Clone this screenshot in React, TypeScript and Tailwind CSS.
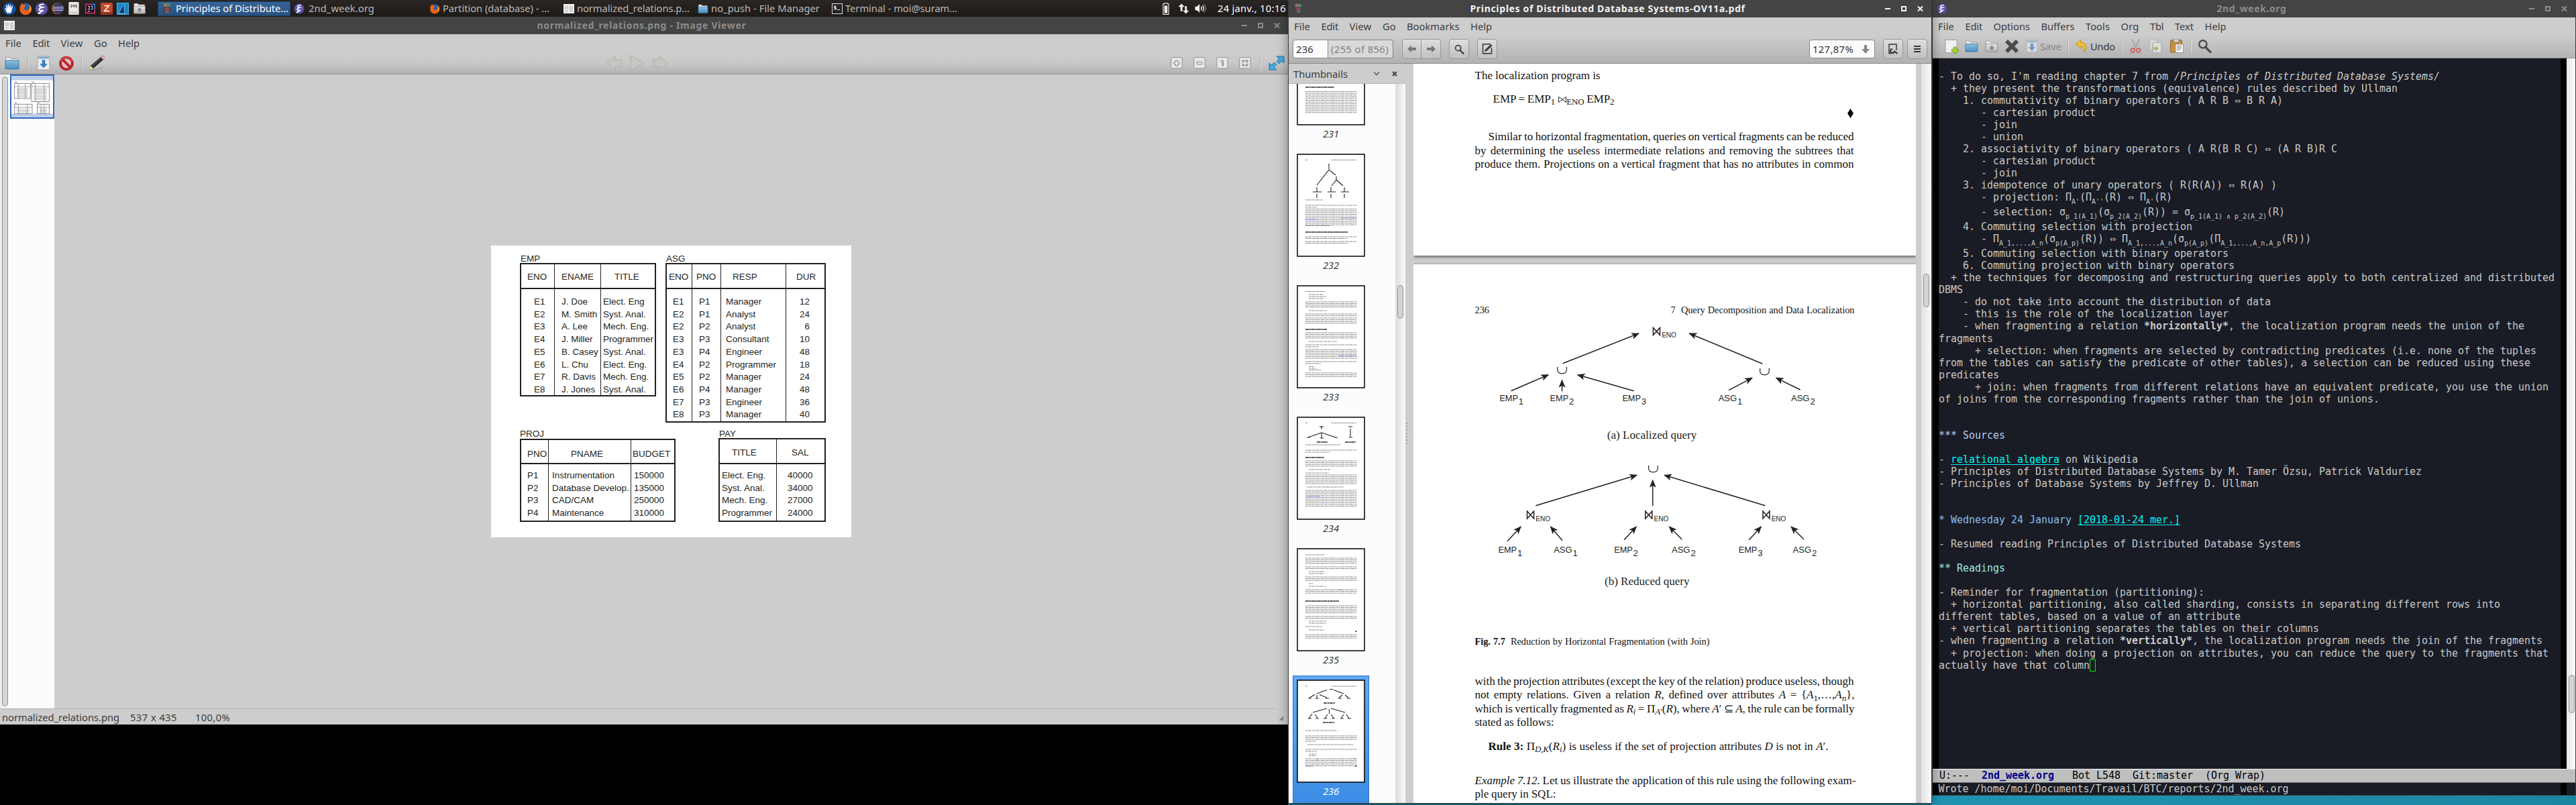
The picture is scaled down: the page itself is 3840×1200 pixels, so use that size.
import React, { useLayoutEffect, useRef, type ReactNode } from "react";

/** Inline text tuned to an exact width through letter or word spacing. */
function Fit({ w, words = false, className = "", children }: { w: number; words?: boolean; className?: string; children: ReactNode }) {
  const ref = useRef<HTMLSpanElement>(null);
  useLayoutEffect(() => {
    const el = ref.current;
    if (!el) return;
    el.style.letterSpacing = "";
    el.style.wordSpacing = "";
    const text = el.textContent ?? "";
    const delta = w - el.getBoundingClientRect().width;
    if (words) {
      el.style.wordSpacing = `${delta / Math.max(1, text.split(" ").length - 1)}px`;
    } else {
      el.style.letterSpacing = `${delta / Math.max(1, text.length)}px`;
    }
  }, [w, words, children]);
  return (
    <span className="block shrink-0 whitespace-nowrap" style={{ width: w }}>
      <span ref={ref} className={`inline-block whitespace-pre ${className}`}>{children}</span>
    </span>
  );
}

/* ---------- icons ---------- */

function EmacsIcon({ className }: { className: string }) {
  return (
    <svg viewBox="0 0 20 20" className={className}>
      <circle cx="10" cy="10" r="9.3" fill="#5b53a3" stroke="#3b357c" />
      <path d="M13.500 3.500c-5-.5-7.500 1.500-6 3.300 1 1.200 3.500.7 4.500 1-4 .9-6.500 2-5.700 3.700.8 1.600 3.500 1.600 6.500 1-3 1-5 2.500-8 5" fill="none" stroke="#fff" strokeWidth="1.900" />
      <path d="M12 13l-5 4.500" stroke="#d8d4ff" strokeWidth="1" />
    </svg>
  );
}

function FirefoxIcon({ className }: { className: string }) {
  return (
    <svg viewBox="0 0 20 20" className={className}>
      <circle cx="10" cy="9.500" r="8" fill="#2a5fa8" />
      <path d="M2 6c1-3 3-4 3.500-4.500 0 1.500 1 2.500 2.500 3 2 .3 3 1.500 2 2.500-1.800.6-2.500 1.800-1.800 3.500 1.500 2.500 6 2 7.300-1 .8-2.500-.5-5-2-6.500 4 1.200 6 5 5.500 9-1 5-5.500 8-10.500 7.200C3 18.300.5 13 2 6z" fill="#e8621b" />
      <path d="M17 5c2 3 1.500 8-2 10.500 1.500-3.500 2.500-6.500 2-10.500z" fill="#f9c32b" />
    </svg>
  );
}

function FolderIcon({ className, home = false }: { className: string; home?: boolean }) {
  const top = home ? "#e4e4e4" : "#8fc0e0";
  const low = home ? "#b5b5b5" : "#4e8fbf";
  const id = home ? "homeFolder" : "blueFolder";
  return (
    <svg viewBox="0 0 22 20" className={className}>
      <defs>
        <linearGradient id={id} x1="0" y1="0" x2="0" y2="1">
          <stop offset="0" stopColor={top} />
          <stop offset="1" stopColor={low} />
        </linearGradient>
      </defs>
      <path d="M1.500 7V1.500h6l1.500 2h11V8" fill="#f6f6f6" stroke="#999" />
      <rect x="1" y="6" width="20" height="13" rx="1" fill={`url(#${id})`} stroke={home ? "#858585" : "#3a78a8"} />
      {home && <path d="M11 8.500l4 3.500h-1.500v4h-5v-4H7z" fill="#8b8b8b" />}
    </svg>
  );
}

function SaveIcon({ className }: { className: string }) {
  return (
    <svg viewBox="0 0 20 22" className={className}>
      <rect x="1" y="1" width="18" height="20" fill="#ececec" stroke="#a2a2a2" />
      <rect x="2" y="1.500" width="16" height="3" fill="#7fa9cb" />
      <path d="M8.200 6.500h3.600v6H15l-5 5.500-5-5.500h3.200z" fill="#2f83d6" stroke="#1d62a8" strokeWidth=".6" />
    </svg>
  );
}

function PaperThumb({ className }: { className: string }) {
  return (
    <svg viewBox="0 0 16 14" className={className}>
      <rect width="16" height="14" fill="#f3f3f3" />
      <path d="M2 3h5v5H2zM9 3h5v6H9zM2 10h5v2H2zM10 10h4v2h-4z" fill="#d5d5d5" stroke="#bbb" strokeWidth=".5" />
    </svg>
  );
}

function BookIcon({ className }: { className: string }) {
  return (
    <svg viewBox="0 0 10 16" className={className}>
      <rect width="10" height="16" fill="#46474f" />
      <rect width="4" height="5" fill="#a9715f" />
      <rect x="4" width="6" height="5" fill="#4c8a72" />
      <rect x="2" y="6" width="6" height="5" fill="#a04349" />
      <rect x="3" y="12" width="5" height="1.500" fill="#8b8b93" />
    </svg>
  );
}

function Magnifier({ className }: { className: string }) {
  return (
    <svg viewBox="0 0 16 16" className={className}>
      <circle cx="6" cy="6" r="4.300" fill="none" stroke="currentColor" strokeWidth="1.800" />
      <path d="M9 9.500l5.500 5.500" stroke="currentColor" strokeWidth="2.400" strokeLinecap="round" />
    </svg>
  );
}

/* ---------- top panel ---------- */

function Launchers() {
  return (
    <div className="flex h-[25px] w-[235px] items-center pl-1">
      <svg viewBox="0 0 20 20" className="h-5 w-5">
        <circle cx="10" cy="10" r="9.500" fill="#0f4fa8" />
        <path d="M6.500 16.500L3.500 10c-.4-1 .8-1.500 1.300-.6L6 11 5 5.500c-.2-1 1.200-1.300 1.500-.3l1.200 4L7.700 4c0-1 1.500-1 1.600 0l.7 5 .8-4.500c.2-1 1.600-.8 1.500.2L12 9.500l1.500-3c.5-.9 1.700-.3 1.400.6L13.500 12c-.2 2-1 3.500-1.500 4.500z" fill="#fff" />
      </svg>
      <FirefoxIcon className="ml-1 h-5 w-5" />
      <EmacsIcon className="ml-1 h-5 w-5" />
      <svg viewBox="0 0 20 20" className="ml-1 h-[19px] w-5">
        <circle cx="10" cy="10" r="9" fill="#e98b2d" />
        <circle cx="11" cy="10" r="8.800" fill="#3d3660" />
        <path d="M3 8h16M2.500 10.500h17M3.500 13h15" stroke="#b9b4d6" strokeWidth="1.200" />
      </svg>
      <svg viewBox="0 0 16 20" className="ml-[6px] h-[19px] w-4">
        <rect width="16" height="20" rx="1.500" fill="#eceae6" />
        <path d="M4 4v5M7 4v4M9.500 4v4M12 4v5" stroke="#555" strokeWidth="1.500" />
        <rect y="15" width="16" height="4" fill="#cfcdc8" />
      </svg>
      <svg viewBox="0 0 16 16" className="ml-[9px] h-4 w-[15px]">
        <path d="M0 0h10l6 6v10H0z" fill="#c02c72" />
        <path d="M9 0h7v10z" fill="#3673c4" />
        <rect x="2" y="2" width="12" height="12" fill="#0b0b0b" />
        <path d="M4 4h2.500v5H4M9 4h2.500v5H9M4 12h4" stroke="#fff" fill="none" />
      </svg>
      <svg viewBox="0 0 18 18" className="ml-[8px] h-[18px] w-[18px]">
        <rect width="18" height="18" rx="2" fill="#c5472b" />
        <path d="M5.500 4.500h7l-7 8h7.500" stroke="#fff" fill="none" strokeWidth="1.500" />
        <rect y="14" width="18" height="4" fill="#953620" />
      </svg>
      <svg viewBox="0 0 18 18" className="ml-[6px] h-[18px] w-[18px]">
        <rect x=".5" y=".5" width="17" height="17" fill="#1787c7" stroke="#48b4ea" />
        <path d="M2 16c3-1 4-11 10-13-1.500 4-1 11 1 13z" fill="#0d3b66" stroke="#9cdcff" strokeWidth=".8" />
      </svg>
      <FolderIcon home className="ml-[6px] h-[17px] w-5" />
    </div>
  );
}

function TaskItem({ icon, w, active = false, gap, children }: { icon: ReactNode; w: number; gap: string; active?: boolean; children: string }) {
  return (
    <div className="flex h-[25px] w-[200px] items-center">
      <div className={`flex h-[22px] w-[198px] items-center ${active ? "border border-[#1c3f66] bg-gradient-to-b from-[#356496] to-[#2a5280] text-white" : "text-[#bdbab7]"}`}>
        <span className={`flex shrink-0 items-center justify-center ${gap}`}>{icon}</span>
        <Fit w={w}>{children}</Fit>
      </div>
    </div>
  );
}

function TopPanel() {
  return (
    <div className="relative z-20 flex h-[25px] items-center bg-gradient-to-b from-[#2a2624] to-[#1d1a18] leading-[25px]">
      <Launchers />
      <TaskItem active gap="w-[26px]" w={168} icon={<BookIcon className="h-4 w-[10px]" />}>Principles of Distribute...</TaskItem>
      <TaskItem gap="w-[25px] pr-[4px]" w={98} icon={<EmacsIcon className="h-4 w-4" />}>2nd_week.org</TaskItem>
      <TaskItem gap="w-[25px]" w={159} icon={<FirefoxIcon className="h-4 w-4" />}>Partition (database) - ...</TaskItem>
      <TaskItem gap="w-[25px]" w={168} icon={<PaperThumb className="h-[14px] w-4" />}>normalized_relations.p...</TaskItem>
      <TaskItem gap="w-[25px]" w={162} icon={<FolderIcon className="h-[14px] w-4" />}>no_push - File Manager</TaskItem>
      <TaskItem
        gap="w-[25px]"
        w={167}
        icon={
          <svg viewBox="0 0 16 16" className="h-4 w-4">
            <rect x=".5" y=".5" width="15" height="15" fill="#232323" stroke="#ddd" />
            <path d="M6.500 4.500h-3v2h3v2h-3M5 3v7M8 9.500h4" stroke="#eee" fill="none" />
          </svg>
        }
      >
        Terminal - moi@suram...
      </TaskItem>
      <div className="ml-[298px] flex items-center">
        <svg viewBox="0 0 10 20" className="h-[18px] w-[10px]">
          <path d="M3 0h4v2h2.500v17.500h-9V2H3z" fill="none" stroke="#fff" strokeWidth="1.200" />
          <rect x="2.500" y="5" width="5" height="12.500" fill="#eee" />
        </svg>
        <svg viewBox="0 0 18 16" className="ml-[13px] h-4 w-[17px]">
          <path d="M5.500 0l5 5H7v7H4V5H.5zM12.500 16l-5-5H11V4h3v7h3.500z" fill="#f2f2f2" />
        </svg>
        <svg viewBox="0 0 18 16" className="ml-[8px] h-[15px] w-[18px]">
          <path d="M0 5h3l4-4v14l-4-4H0z" fill="#fff" />
          <path d="M9.500 5q2 3 0 6M12 3q3.500 5 0 10" stroke="#eee" fill="none" strokeWidth="1.500" />
          <path d="M14.500 1q5 7 0 14" stroke="#777" fill="none" strokeWidth="1.300" />
        </svg>
        <span className="ml-[16px] text-white"><Fit w={102}>24 janv., 10:16</Fit></span>
      </div>
    </div>
  );
}

/* ---------- shared window parts ---------- */

function TitleBar({ title, w, icon, active = false }: { title: string; w: number; icon: ReactNode; active?: boolean }) {
  const tone = active ? "text-[#f2f2f2]" : "text-[#8c8c8c]";
  return (
    <div className="flex h-[26px] shrink-0 items-center bg-[#444444] px-[6px]">
      <span className="w-[60px]">{icon}</span>
      <div className={`flex flex-1 justify-center text-sm font-bold leading-[26px] ${tone}`}>
        <Fit w={w}>{title}</Fit>
      </div>
      <svg viewBox="0 0 62 12" className={`mr-[5px] h-3 w-[62px] ${tone}`}>
        <path d="M4 6h8" stroke="currentColor" strokeWidth="2" />
        <rect x="29" y="3" width="6" height="6" fill="none" stroke="currentColor" strokeWidth="2" />
        <path d="M53 2.500l7 7M60 2.500l-7 7" stroke="currentColor" strokeWidth="2" />
      </svg>
    </div>
  );
}

function MenuBar({ items }: { items: [string, number][] }) {
  return (
    <div className="flex h-[27px] shrink-0 gap-[16.500px] pl-2 leading-[27px] text-[#3c3c3c]">
      {items.map(([label, w]) => (
        <Fit key={label} w={w}>{label}</Fit>
      ))}
    </div>
  );
}

const Sep = ({ className }: { className: string }) => <span className={`w-[2px] border-l border-[#b0b0b0] border-r border-r-[#dedede] ${className}`} />;

/* ---------- image viewer ---------- */

type Column = { w: string; headPad: string; pad: string; head: string; rows: string[] };

function RelationTable({ name, columns, height, headHeight, headLine, bodyPad, label }: { name: string; columns: Column[]; height: string; headHeight: string; headLine: string; bodyPad: string; label: string }) {
  return (
    <div>
      <div className={`h-[14px] ${label}`}>{name}</div>
      <div className={`flex border-2 border-[#231f20] ${height}`}>
        {columns.map((c, i) => (
          <div key={c.head} className={`flex flex-col ${c.w} ${i > 0 ? "border-l border-[#231f20]" : ""}`}>
            <div className={`whitespace-nowrap border-b-2 border-[#231f20] ${headHeight} ${headLine} ${c.headPad}`}>{c.head}</div>
            <div className={`${bodyPad} ${c.pad}`}>
              {c.rows.map((r, k) => (
                <div key={k} className="h-[18.730px] whitespace-nowrap leading-[18.730px]">{r}</div>
              ))}
            </div>
          </div>
        ))}
      </div>
    </div>
  );
}

const EMP: Column[] = [
  { w: "w-[49px]", headPad: "pl-[9px]", pad: "pl-[19px]", head: "ENO", rows: ["E1", "E2", "E3", "E4", "E5", "E6", "E7", "E8"] },
  { w: "w-[69px]", headPad: "pl-[10px]", pad: "pl-[10px]", head: "ENAME", rows: ["J. Doe", "M. Smith", "A. Lee", "J. Miller", "B. Casey", "L. Chu", "R. Davis", "J. Jones"] },
  { w: "flex-1", headPad: "pl-[20px]", pad: "pl-[3px]", head: "TITLE", rows: ["Elect. Eng", "Syst. Anal.", "Mech. Eng.", "Programmer", "Syst. Anal.", "Elect. Eng.", "Mech. Eng.", "Syst. Anal."] },
];
const ASG: Column[] = [
  { w: "w-[37px]", headPad: "pl-[3px]", pad: "pl-[9px]", head: "ENO", rows: ["E1", "E2", "E2", "E3", "E3", "E4", "E5", "E6", "E7", "E8"] },
  { w: "w-[43px]", headPad: "pl-[6px]", pad: "pl-[10px]", head: "PNO", rows: ["P1", "P1", "P2", "P3", "P4", "P2", "P2", "P4", "P3", "P3"] },
  { w: "w-[97px]", headPad: "pl-[17px]", pad: "pl-[7px]", head: "RESP", rows: ["Manager", "Analyst", "Analyst", "Consultant", "Engineer", "Programmer", "Manager", "Manager", "Engineer", "Manager"] },
  { w: "flex-1", headPad: "pl-[15px]", pad: "pr-[22px] text-right", head: "DUR", rows: ["12", "24", "6", "10", "48", "18", "24", "48", "36", "40"] },
];
const PROJ: Column[] = [
  { w: "w-[40px]", headPad: "pl-[9px]", pad: "pl-[9px]", head: "PNO", rows: ["P1", "P2", "P3", "P4"] },
  { w: "w-[123px]", headPad: "pl-[33px]", pad: "pl-[5px]", head: "PNAME", rows: ["Instrumentation", "Database Develop.", "CAD/CAM", "Maintenance"] },
  { w: "flex-1", headPad: "pl-[2px]", pad: "pl-[4px]", head: "BUDGET", rows: ["150000", "135000", "250000", "310000"] },
];
const PAY: Column[] = [
  { w: "w-[84px]", headPad: "pl-[18px]", pad: "pl-[3px]", head: "TITLE", rows: ["Elect. Eng.", "Syst. Anal.", "Mech. Eng.", "Programmer"] },
  { w: "flex-1", headPad: "pl-[22px]", pad: "pl-[16px]", head: "SAL", rows: ["40000", "34000", "27000", "24000"] },
];

function RelationsImage() {
  return (
    <div className="flex h-[435px] w-[537px] bg-white pt-[12px] font-['Liberation_Sans',Arial,sans-serif] text-[13.500px] text-[#231f20]">
      <div className="ml-[43px] w-[217px]">
        <div className="w-[203px]">
          <RelationTable name="EMP" columns={EMP} height="h-[199px]" headHeight="h-[37px]" headLine="leading-[38px]" bodyPad="pt-[10px]" label="pl-px leading-4" />
        </div>
        <div className="mt-[49px] w-[232px]">
          <RelationTable name="PROJ" columns={PROJ} height="h-[124px]" headHeight="h-[36px]" headLine="leading-[42px]" bodyPad="pt-[8px]" label="leading-[13px]" />
        </div>
      </div>
      <div className="w-[239px]">
        <RelationTable name="ASG" columns={ASG} height="h-[238px]" headHeight="h-[37px]" headLine="leading-[38px]" bodyPad="pt-[10px]" label="pl-px leading-4" />
        <div className="ml-[79px] mt-[9px] w-[160px]">
          <RelationTable name="PAY" columns={PAY} height="h-[125px]" headHeight="h-[37px]" headLine="leading-[40px]" bodyPad="pt-[8px]" label="pl-px leading-[15px]" />
        </div>
      </div>
    </div>
  );
}

function RelationsThumb() {
  const boxes = [[5, 8, 25, 24], [32, 8, 28, 29], [5, 41, 28, 15], [41, 41, 19, 15]];
  return (
    <svg viewBox="0 0 66 53" className="h-[53px] w-[66px]">
      <rect width="66" height="53" fill="#fff" />
      {boxes.map(([x, y, w, h], i) => (
        <g key={i}>
          <path d={`M${x} ${y - 5}h4`} stroke="#777" strokeWidth="1" />
          <rect x={x} y={y - 3} width={w} height={h} fill="none" stroke="#777" strokeWidth=".9" />
          <path d={`M${x} ${y + 2}h${w}M${x + 6} ${y - 3}v${h}M${x + w - 8} ${y - 3}v${h}`} stroke="#888" strokeWidth=".8" />
          <path d={`M${x + w / 2} ${y + 4}v${h - 8}`} stroke="#999" strokeWidth={w - 7} strokeDasharray="1 1.300" strokeOpacity=".75" />
        </g>
      ))}
    </svg>
  );
}

const zoomGlyphs = [
  "M7.500 5.500h3v2.500h2.500v3h-2.500v2.500h-3v-2.500H5v-3h2.500z",
  "M5 7.500h8v3.500H5z",
  "M7.500 5.500h3v8h-1.500v-6h-1.500z",
  "M5 8V5h3v1.500H6.500V8zM13 8V5h-3v1.500h1.500V8zM5 10.500v3h3V12H6.500v-1.500zM13 10.500v3h-3V12h1.500v-1.500z",
];

function ImageViewer() {
  return (
    <div className="flex h-[1055px] flex-col bg-[#cdcdcd]">
      <TitleBar title="normalized_relations.png - Image Viewer" w={312} icon={<PaperThumb className="h-[14px] w-4" />} />
      <MenuBar items={[["File", 24], ["Edit", 25.500], ["View", 33], ["Go", 19.500], ["Help", 32]]} />
      <div className="flex h-[33px] shrink-0 items-center border-b border-[#8f8f8f] bg-gradient-to-b from-[#cdcdcd] via-[#c8c8c8] to-[#b2b2b2] pl-[7px]">
        <FolderIcon className="h-[20px] w-[22px]" />
        <Sep className="ml-[12px] h-5" />
        <SaveIcon className="ml-[12px] h-[22px] w-[20px]" />
        <svg viewBox="0 0 24 24" className="ml-[12px] h-[23px] w-[24px]">
          <circle cx="12" cy="12" r="9.200" fill="#e3c0c0" stroke="#b8222a" strokeWidth="4" />
          <path d="M6 6l12 12" stroke="#b8222a" strokeWidth="4" />
          <path d="M3.500 9a9 9 0 0 1 17 0" stroke="#e8757a" strokeWidth="1" fill="none" />
        </svg>
        <Sep className="ml-[10px] h-5" />
        <svg viewBox="0 0 25 24" className="ml-[9px] h-6 w-[25px]">
          <path d="M4 22q10 1 18-4" stroke="#a5a5a5" strokeWidth="2" fill="none" />
          <path d="M1 23l2-7L18 3l4 4L7 20z" fill="#2b2b2b" />
          <path d="M1 23l2-7 4 4z" fill="#eddc8e" />
          <path d="M18 3l2.500-2.500q3 .5 3.500 4L22 7z" fill="#dca0ca" stroke="#955f86" strokeWidth=".5" />
          <path d="M6 16L18 5" stroke="#777" />
        </svg>
        <svg viewBox="0 0 92 24" className="ml-[747px] h-6 w-[92px]">
          <path d="M1 12L13 1v6h9v10h-9v6z" fill="#c6c7c0" stroke="#adaea8" />
          <path d="M36 1l20 11-20 11z" fill="#c6c7c0" stroke="#adaea8" />
          <path d="M91 12L79 1v6h-9v10h9v6z" fill="#c6c7c0" stroke="#adaea8" />
        </svg>
        <div className="ml-[749px] flex gap-4">
          {zoomGlyphs.map((d) => (
            <svg key={d} viewBox="0 0 18 18.500" className="h-[18px] w-[18px]">
              <rect x=".5" y=".5" width="17" height="17" rx="2" fill="#e6e6e6" stroke="#8d8d8d" />
              <path d={d} fill="#f4f4f4" stroke="#7d7d7d" />
            </svg>
          ))}
        </div>
        <Sep className="ml-[13px] h-5" />
        <svg viewBox="0 0 24 22" className="ml-[11px] h-[22px] w-[24px]">
          <path d="M12 1h11v10l-3.500-3-4 4-3.500-3.500 4-4z" fill="#4aa8e0" stroke="#1d72ac" />
          <path d="M12 21H1V11l3.500 3 4-4 3.500 3.500-4 4z" fill="#4aa8e0" stroke="#1d72ac" />
        </svg>
      </div>
      <div className="flex min-h-0 flex-1">
        <div className="flex w-[81px] bg-[#fcfcfc]">
          <div className="w-[15px] bg-gradient-to-r from-[#ebebeb] to-white py-[3px] pl-[3px]">
            <div className="h-full w-[9px] rounded-full border border-[#8f8f8f] bg-[#d6d6d6]" />
          </div>
          <div className="flex h-[66px] w-[66px] items-center overflow-hidden border-2 border-[#2f69bd] bg-[#bccdec]">
            <RelationsThumb />
          </div>
        </div>
        <div className="flex flex-1 items-center justify-center">
          <RelationsImage />
        </div>
      </div>
      <div className="mr-[18px] h-px shrink-0 bg-[#b4b4b4]" />
      <div className="flex h-[23px] shrink-0 pl-[3px] leading-[25px] text-[#3c3c3c]">
        <Fit w={175}>normalized_relations.png</Fit>
        <span className="ml-4"><Fit w={70}>537 x 435</Fit></span>
        <span className="ml-[27px]"><Fit w={52}>100,0%</Fit></span>
        <svg viewBox="0 0 7 7" className="ml-auto mr-[7px] mt-[10px] h-[7px] w-[7px]">
          <path d="M7 0v7H0z" fill="#8e8e8e" />
        </svg>
      </div>
    </div>
  );
}

/* ---------- pdf reader ---------- */

/** One run of greeked text lines: first y, line count, left, right, optional style. */
type Run = { y: number; n?: number; x?: number; r?: number; bold?: boolean; link?: boolean };

const thumbRuns: Record<string, Run[]> = {
  "231": [
    { y: 97, r: 56, bold: true },
    { y: 103.500, n: 13 },
  ],
  "232": [
    { y: 9.500, r: 16 }, { y: 9.500, x: 52 }, { y: 69, r: 39 },
    { y: 77, r: 90 }, { y: 80, r: 30 }, { y: 82.700, n: 10 }, { y: 98, x: 13, r: 30, link: true }, { y: 96, x: 66, link: true }, { y: 107.500, r: 50 },
    { y: 117, r: 76, bold: true }, { y: 124 }, { y: 126.500, r: 75 }, { y: 131 }, { y: 133.500, r: 76 },
  ],
  "233": [
    { y: 9.500, r: 42 }, { y: 14, x: 18, r: 40 }, { y: 17, x: 18, r: 44 }, { y: 20, x: 18, r: 41 },
    { y: 25, n: 2 }, { y: 30, n: 2 }, { y: 38, x: 18, r: 45 }, { y: 43, n: 2 }, { y: 49, n: 4 }, { y: 66, r: 45, bold: true },
    { y: 71, n: 4 }, { y: 84, x: 18, r: 60 }, { y: 89 }, { y: 92, r: 32 }, { y: 96, n: 6 }, { y: 105, x: 62, link: true },
    { y: 114 }, { y: 117, r: 36 }, { y: 121.500, x: 18, r: 25 }, { y: 124, x: 18, r: 30 }, { y: 126.500, x: 18, r: 36 }, { y: 131, n: 3 },
  ],
  "234": [
    { y: 9.500, r: 16 }, { y: 9.500, x: 52 }, { y: 38, x: 30, r: 46, bold: true }, { y: 38, x: 72, r: 88, bold: true }, { y: 42, r: 65 },
    { y: 50 }, { y: 53, r: 44 }, { y: 53, x: 45, r: 50, link: true }, { y: 61, r: 41, bold: true }, { y: 66, n: 4 }, { y: 79, x: 18, r: 50 },
    { y: 84, r: 48 }, { y: 87, n: 6 }, { y: 105, r: 70, x: 15 }, { y: 110, n: 10 }, { y: 119, x: 15, r: 35, link: true },
  ],
  "235": [
    { y: 10, r: 42 }, { y: 15, n: 4 }, { y: 28, n: 2 }, { y: 35, x: 18, r: 41 }, { y: 38, x: 18, r: 41 }, { y: 43, n: 3 }, { y: 53, x: 18, r: 24 }, { y: 57, x: 18, r: 44 },
    { y: 62, n: 3 }, { y: 62, x: 62, r: 68, link: true }, { y: 79, r: 63, bold: true }, { y: 86, n: 5 }, { y: 102, n: 2 }, { y: 109, x: 18, r: 44 }, { y: 112, x: 18, r: 44 },
    { y: 117, r: 38 }, { y: 122, x: 18, r: 41 }, { y: 124, x: 87, bold: true }, { y: 129, n: 3 },
  ],
  "236": [
    { y: 10, r: 16 }, { y: 10, x: 52 }, { y: 35, x: 40, r: 57, bold: true }, { y: 64, x: 39, r: 56, bold: true }, { y: 76, r: 60 },
    { y: 84, n: 3 }, { y: 92, r: 29 }, { y: 97, x: 16, r: 84 }, { y: 104 }, { y: 107, r: 30 }, { y: 111, x: 18, r: 30 }, { y: 113.500, x: 18, r: 29 },
    { y: 118, n: 5 }, { y: 118, x: 84, link: true }, { y: 120, x: 29, r: 33, link: true }, { y: 129, r: 25 }, { y: 129, x: 87, bold: true },
  ],
};

const thumbTrees: Record<string, string> = {
  "232": "M48 15v8M48 24L30 47M48 24l10 8M59 34v5l-7 9M59 39l10 9M30 50v7M51 50v7M71 50v7M30 60v6M51 60v6M71 60v6M24 57h13M46 57h12M66 57h12",
  "234": "M37 14v5M37 24l-20 7M37 24v8M37 24l21 7M80 18v12M34 15h6M77 15h6M15 31h5M35 32h5M56 31h5M78 31h5",
  "236": "M49 14.500h5M45 15.500L30 21M55 15.500L70 21M27 22.500L19 27M30 23v5M34 22.500L45 27M68 23l-5 4M72 23l5 4M45 43L24 49M48.500 44v7M51 43L72 49M23 51l-5 7M27 52l4 5M46 52l-4 6M51 52l4 5M70 52l-4 6M74 52l4 6M17 28h5M28 28h5M43 28h5M62 28h5M75 28h5M17 58h5M28 58h5M40 58h5M52 58h5M65 58h5M76 58h5",
};

function PageThumb({ page }: { page: string }) {
  return (
    <svg viewBox="0 0 102 154" className="h-[154px] w-[102px]">
      <rect x="1" y="1" width="100" height="152" fill="#fff" stroke="#000" strokeWidth="1.500" />
      {thumbRuns[page].map((run, i) =>
        Array.from({ length: run.n ?? 1 }, (_, k) => (
          <path
            key={`${i}-${k}`}
            d={`M${run.x ?? 13} ${run.y + k * 2.600}H${run.r ?? 89.500}`}
            stroke={run.link ? "#4a4aee" : run.bold ? "#111" : "#555"}
            strokeWidth={run.bold ? 1.500 : 1}
            strokeDasharray={run.bold ? "5 .6 3 .5" : k % 2 ? "4 .8 2.500 .6 6 .9" : "3 .7 5 .9 2 .6"}
            strokeOpacity={run.bold ? 0.9 : run.link ? 0.6 : 0.7}
          />
        )),
      )}
      {thumbTrees[page] && <path d={thumbTrees[page]} stroke="#222" strokeWidth="1.100" fill="none" />}
    </svg>
  );
}

function ToolButton({ className, children }: { className: string; children: ReactNode }) {
  return <div className={`flex h-[30px] items-center justify-center rounded-sm border border-[#969696] bg-gradient-to-b from-[#dedede] to-[#c0c0c0] text-[#3a3a3a] ${className}`}>{children}</div>;
}

const Arrow = ({ left = false }: { left?: boolean }) => (
  <svg viewBox="0 0 13 12" className="h-3 w-[13px]">
    <path d={left ? "M0 6l6-5.500V4h7v4H6v3.500z" : "M13 6L7 .5V4H0v4h7v3.500z"} fill="#777" />
  </svg>
);

const Bowtie = () => (
  <svg viewBox="0 0 12 9" className="ml-[5px] inline-block h-[9px] w-[12px] align-baseline">
    <path d="M.5 .3v8.400L11.500 .3v8.400L.5 .3z" fill="none" stroke="#111" strokeWidth=".9" />
  </svg>
);

function PageOneText() {
  return (
    <div className="pl-[92px] pt-2">
      <div className="h-5 leading-5"><Fit words w={187}>The localization program is</Fit></div>
      <div className="ml-[27px] mt-[15px] h-5 leading-5">
        <Fit words w={181}>EMP = EMP<sub>1</sub><Bowtie /><sub>ENO</sub> EMP<sub>2</sub></Fit>
      </div>
      <svg viewBox="0 0 9 14" className="ml-[555px] mt-1 h-[14px] w-[9px]">
        <path d="M4.500 0L9 7l-4.500 7L0 7z" fill="#000" />
      </svg>
      <div className="mt-[18px] leading-[20.700px]">
        <div className="ml-5"><Fit words w={545}>Similar to horizontal fragmentation, queries on vertical fragments can be reduced</Fit></div>
        <Fit words w={565}>by determining the useless intermediate relations and removing the subtrees that</Fit>
        <Fit words w={565}>produce them. Projections on a vertical fragment that has no attributes in common</Fit>
      </div>
    </div>
  );
}

const edges = [
  [2329.7, 541.7, 2443, 497], [2627.3, 542.3, 2518.3, 497],
  [2252.5, 582.7, 2308.2, 558.7], [2328.5, 583.3, 2328.5, 566.7], [2435.6, 582.7, 2351.7, 558.7],
  [2577, 581.7, 2612, 563.3], [2683.6, 581, 2647.5, 563.3],
  [2289.3, 753.7, 2440, 708.3], [2463.7, 754.3, 2463.7, 715.7], [2631.5, 753.7, 2481, 708.3],
  [2247, 806.7, 2267.2, 785], [2329, 805.7, 2311.3, 785],
  [2421, 804.7, 2439.3, 785], [2507.2, 804, 2488.3, 785],
  [2607, 805, 2625.4, 785], [2689, 804, 2670, 785],
];
const leaves: [string, string, number, number][] = [
  ["EMP", "1", 2235.4, 598], ["EMP", "2", 2310.6, 598], ["EMP", "3", 2418.4, 598], ["ASG", "1", 2561.7, 598], ["ASG", "2", 2670, 598],
  ["EMP", "1", 2233.5, 824], ["ASG", "1", 2316.2, 824], ["EMP", "2", 2406.2, 824], ["ASG", "2", 2492, 824], ["EMP", "3", 2591.8, 824], ["ASG", "2", 2672.6, 824],
];
const joins = [[2463.7, 488.500], [2275.8, 762], [2452, 762], [2627.2, 762]];
const unions = [[2321.7, 547], [2623.6, 549], [2457.6, 694]];

function QueryTrees() {
  return (
    <svg viewBox="2199 480 566 400" className="h-[400px] w-[566px]" fontFamily="'Liberation Sans', Arial, sans-serif" fill="#231f20">
      <defs>
        <marker id="tip" viewBox="0 0 12 10" refX="11" refY="5" markerWidth="12" markerHeight="10" markerUnits="userSpaceOnUse" orient="auto">
          <path d="M12 5L0 0l3 5-3 5z" fill="#231f20" />
        </marker>
      </defs>
      {edges.map(([x1, y1, x2, y2], i) => (
        <path key={i} d={`M${x1} ${y1}L${x2} ${y2}`} stroke="#231f20" strokeWidth="1.500" markerEnd="url(#tip)" />
      ))}
      {joins.map(([x, y], i) => (
        <g key={i}>
          <path d={`M${x + 0.7} ${y}v11l10-11v11z`} fill="none" stroke="#231f20" strokeWidth="1.500" />
          <text x={x + 13.500} y={y + 14.800} fontSize="10">ENO</text>
        </g>
      ))}
      {unions.map(([x, y], i) => (
        <path key={i} d={`M${x} ${y}v4.500q.5 5.300 6.800 5.300t6.800-5.300v-4.500`} fill="none" stroke="#231f20" strokeWidth="1.200" />
      ))}
      {leaves.map(([name, sub, x, y], i) => (
        <g key={i} fontSize="13">
          <text x={x} y={y} textLength="27.500" lengthAdjust="spacingAndGlyphs">{name}</text>
          <text x={x + 28.400} y={y + 5}>{sub}</text>
        </g>
      ))}
      <g fontFamily="'Liberation Serif', 'Times New Roman', serif" fontSize="17">
        <text x="2395.800" y="654" textLength="133.500">(a) Localized query</text>
        <text x="2392" y="871.500" textLength="126.500">(b) Reduced query</text>
      </g>
    </svg>
  );
}

function PageTwoText() {
  return (
    <div className="pl-[92px] pt-[57.500px]">
      <div className="flex h-5 w-[566px] justify-between text-[14.300px] leading-5">
        <span>236</span>
        <Fit words w={274}>7  Query Decomposition and Data Localization</Fit>
      </div>
      <div className="mt-[8.500px] h-[400px]"><QueryTrees /></div>
      <div className="mt-[66px] h-5 text-[14.300px] leading-5">
        <Fit words w={350}><b>Fig. 7.7</b>  Reduction by Horizontal Fragmentation (with Join)</Fit>
      </div>
      <div className="mt-10 leading-[20.400px]">
        <Fit words w={565}>with the projection attributes (except the key of the relation) produce useless, though</Fit>
        <Fit words w={566}>not empty relations. Given a relation <i>R</i>, defined over attributes <i>A</i> = {"{"}<i>A</i><sub>1</sub>,…,<i>A<sub>n</sub></i>{"}"},</Fit>
        <Fit words w={566}>which is vertically fragmented as <i>R<sub>i</sub></i> = Π<sub><i>A</i>′</sub>(<i>R</i>), where <i>A</i>′ ⊆ <i>A</i>, the rule can be formally</Fit>
        <Fit words w={118}>stated as follows:</Fit>
        <div className="ml-5 mt-[15px]">
          <Fit words w={507}><b>Rule 3:</b> Π<sub><i>D,K</i></sub>(<i>R<sub>i</sub></i>) is useless if the set of projection attributes <i>D</i> is not in <i>A</i>′.</Fit>
        </div>
        <div className="mt-[30.600px]">
          <Fit words w={568}><i>Example 7.12.</i> Let us illustrate the application of this rule using the following exam-</Fit>
          <Fit words w={121}>ple query in SQL:</Fit>
        </div>
      </div>
    </div>
  );
}

function PdfReader() {
  return (
    <div className="relative z-10 flex h-[1198px] w-[960px] shrink-0 flex-col border-b border-l border-r border-[#3a3a3a] bg-[#cdcdcd] shadow-[0_0_16px_rgba(0,0,0,0.400)]">
      <TitleBar active title="Principles of Distributed Database Systems-OV11a.pdf" w={410} icon={<BookIcon className="ml-1 h-4 w-[9px]" />} />
      <MenuBar items={[["File", 24], ["Edit", 25.500], ["View", 33], ["Go", 19.500], ["Bookmarks", 78.500], ["Help", 32]]} />
      <div className="flex h-[42px] shrink-0 items-start border-b border-[#8a8a8a] bg-gradient-to-b from-[#cdcdcd] to-[#b2b2b2] pl-[6px] pt-[5px]">
        <div className="mt-px flex h-7 leading-[27px]">
          <div className="w-[53px] rounded-l-sm border border-[#888] bg-[#fbfbfb] pl-[4px] text-[#333]"><Fit w={26}>236</Fit></div>
          <div className="w-[97px] rounded-r-sm border border-l-0 border-[#888] bg-[#d9d9d9] pl-[4px] text-[#808080]"><Fit w={86}>(255 of 856)</Fit></div>
        </div>
        <ToolButton className="ml-[13px] w-[29px] rounded-r-none"><Arrow left /></ToolButton>
        <ToolButton className="w-[29px] rounded-l-none border-l-0"><Arrow /></ToolButton>
        <ToolButton className="ml-3 w-[30px]"><Magnifier className="h-[15px] w-[15px]" /></ToolButton>
        <ToolButton className="ml-3 w-[30px]">
          <svg viewBox="0 0 16 16" className="h-4 w-4">
            <path d="M13 .8H1.500v14h13V6" fill="none" stroke="#333" strokeWidth="1.400" />
            <path d="M4 12.500l1-3.500L13.500 1l2 2L7 11z" fill="#333" />
          </svg>
        </ToolButton>
        <div className="ml-[465px] mt-px flex h-7 w-[98px] rounded-sm border border-[#888] bg-[#fbfbfb] pl-[4px] leading-[27px] text-[#333]">
          <Fit w={61}>127,87%</Fit>
          <svg viewBox="0 0 12 13" className="ml-3 mt-[7px] h-[13px] w-3">
            <path d="M4 0h4v6h4l-6 7-6-7h4z" fill="#858585" />
          </svg>
        </div>
        <ToolButton className="ml-3 w-[30px]">
          <svg viewBox="0 0 14 16" className="h-4 w-[14px]">
            <path d="M5 14.500H1V1h11v9" fill="none" stroke="#333" strokeWidth="1.400" />
            <path d="M6 8a3 3 0 1 0 3 3.500L13.500 15" fill="none" stroke="#333" strokeWidth="2" />
          </svg>
        </ToolButton>
        <ToolButton className="ml-[6px] w-[30px]">
          <svg viewBox="0 0 10 12" className="h-3 w-[10px]">
            <path d="M0 2h10M0 6h10M0 10h10" stroke="#333" strokeWidth="2" />
          </svg>
        </ToolButton>
      </div>
      <div className="flex min-h-0 flex-1">
        <div className="flex w-[174px] flex-col">
          <div className="flex h-[30px] shrink-0 items-center border-b border-[#b8b8b8] pl-[7px] leading-[30px] text-[#3c3c3c]">
            <Fit w={81}>Thumbnails</Fit>
            <svg viewBox="0 0 40 10" className="ml-[37px] h-[10px] w-10">
              <path d="M2 2.500l4 4 4-4" stroke="#555" strokeWidth="1.500" fill="none" />
              <path d="M30 2l6 6M36 2l-6 6" stroke="#444" strokeWidth="2.200" />
            </svg>
          </div>
          <div className="flex min-h-0 flex-1">
            <div className="w-[159px] overflow-hidden bg-[#fcfcfc] pl-[6px]">
              <div className="-mt-[98px]">
                {["231", "232", "233", "234", "235", "236"].map((p) => (
                  <div key={p} className={`flex h-[196px] w-[114px] flex-col items-center pt-[5px] ${p === "236" ? "border border-[#2f74bf] bg-gradient-to-b from-[#5fa9f8] to-[#3a8ce4] text-white" : "border border-transparent text-[#3c3c3c]"}`}>
                    <PageThumb page={p} />
                    <div className="pt-[2px] italic leading-5"><Fit w={24}>{p}</Fit></div>
                  </div>
                ))}
              </div>
            </div>
            <div className="w-[15px] bg-gradient-to-r from-[#dcdcdc] to-[#fafafa] pl-[3px] pt-[300px]">
              <div className="h-[50px] w-[9px] rounded-full border border-[#8f8f8f] bg-[#d4d4d4]" />
            </div>
          </div>
        </div>
        <div className="flex w-[11.500px] items-center pl-px">
          <div className="flex flex-col gap-[3px]">
            {[0, 1, 2, 3, 4, 5, 6].map((i) => <span key={i} className="h-[2px] w-[2px] bg-[#a4a4a4]" />)}
          </div>
        </div>
        <div className="w-[749.500px] overflow-hidden font-['Liberation_Serif','Times_New_Roman',serif] text-[17px] text-[#111]">
          <div className="h-[286px] bg-white shadow-[0_2px_4px_rgba(0,0,0,0.500)]"><PageOneText /></div>
          <div className="mt-[13px] h-[820px] bg-white shadow-[0_0_3px_rgba(0,0,0,0.400)]"><PageTwoText /></div>
        </div>
        <div className="ml-2 flex-1 bg-gradient-to-r from-[#e2e2e2] to-[#fafafa] pl-[3px] pt-[313px]">
          <div className="h-[50px] w-[9px] rounded-full border border-[#8f8f8f] bg-[#d4d4d4]" />
        </div>
      </div>
    </div>
  );
}

/* ---------- emacs ---------- */

const Sub = ({ children }: { children: string }) => <span className="relative top-[4.500px] inline-block whitespace-pre text-[10px] leading-none tracking-[-0.020px]">{children}</span>;
const Lnk = ({ children }: { children: string }) => <span className="text-[#00f5f5] underline decoration-1 underline-offset-2">{children}</span>;

type Entry = { t: ReactNode; h?: "tall" | "bold" };
const buffer: Entry[] = [
  { t: "" },
  { t: <>- To do so, I'm reading chapter 7 from <i>/Principles of Distributed Database Systems/</i></> },
  { t: "  + they present the transformations (equivalence) rules described by Ullman" },
  { t: "    1. commutativity of binary operators ( A R B ⇔ B R A)" },
  { t: "       - cartesian product" },
  { t: "       - join" },
  { t: "       - union" },
  { t: "    2. associativity of binary operators ( A R(B R C) ⇔ (A R B)R C" },
  { t: "       - cartesian product" },
  { t: "       - join" },
  { t: "    3. idempotence of unary operators ( R(R(A)) ⇔ R(A) )" },
  { t: <>       - projection: Π<Sub>A'</Sub>(Π<Sub>A''</Sub>(R) ⇔ Π<Sub>A'</Sub>(R)</>, h: "tall" },
  { t: <>       - selection: σ<Sub>p_1(A_1)</Sub>(σ<Sub>p_2(A_2)</Sub>(R)) = σ<Sub>p_1(A_1) ∧ p_2(A_2)</Sub>(R)</>, h: "tall" },
  { t: "    4. Commuting selection with projection" },
  { t: <>       - Π<Sub>A_1,...,A_n</Sub>(σ<Sub>p(A_p)</Sub>(R)) ⇔ Π<Sub>A_1,...,A_n</Sub>(σ<Sub>p(A_p)</Sub>(Π<Sub>A_1,...,A_n,A_p</Sub>(R)))</>, h: "tall" },
  { t: "    5. Commuting selection with binary operators" },
  { t: "    6. Commuting projection with binary operators" },
  { t: "  + the techniques for decomposing and restructuring queries apply to both centralized and distributed" },
  { t: "DBMS" },
  { t: "    - do not take into account the distribution of data" },
  { t: "    - this is the role of the localization layer" },
  { t: <>    - when fragmenting a relation <b>*horizontally*</b>, the localization program needs the union of the</>, h: "bold" },
  { t: "fragments" },
  { t: "      + selection: when fragments are selected by contradicting predicates (i.e. none of the tuples" },
  { t: "from the tables can satisfy the predicate of other tables), a selection can be reduced using these" },
  { t: "predicates" },
  { t: "      + join: when fragments from different relations have an equivalent predicate, you use the union" },
  { t: "of joins from the corresponding fragments rather than the join of unions." },
  { t: "" },
  { t: "" },
  { t: <span className="text-[#b4cdf2]">*** Sources</span> },
  { t: "" },
  { t: <>- <Lnk>relational algebra</Lnk> on Wikipedia</> },
  { t: "- Principles of Distributed Database Systems by M. Tamer Özsu, Patrick Valduriez" },
  { t: "- Principles of Database Systems by Jeffrey D. Ullman" },
  { t: "" },
  { t: "" },
  { t: <span className="text-[#87bef0]">* Wednesday 24 January <Lnk>[2018-01-24 mer.]</Lnk></span> },
  { t: "" },
  { t: "- Resumed reading Principles of Distributed Database Systems" },
  { t: "" },
  { t: <span className="text-[#9aebeb]">** Readings</span> },
  { t: "" },
  { t: "- Reminder for fragmentation (partitioning):" },
  { t: "  + horizontal partitioning, also called sharding, consists in separating different rows into" },
  { t: "different tables, based on a value of an attribute" },
  { t: "  + vertical partitioning separates the tables on their columns" },
  { t: <>- when fragmenting a relation <b>*vertically*</b>, the localization program needs the join of the fragments</>, h: "bold" },
  { t: "  + projection: when doing a projection on attributes, you can reduce the query to the fragments that" },
  { t: <>actually have that column<span className="inline-block h-[18px] w-[9px] border border-[#00ee00] align-top" /></> },
];
const lineHeights = { tall: "h-[22px]", bold: "h-[19px]", normal: "h-[18px]" };

function Emacs() {
  return (
    <div className="flex h-[1186px] w-[960px] flex-col border-b border-l border-r border-[#3a3a3a] bg-[#cdcdcd]">
      <TitleBar title="2nd_week.org" w={104} icon={<EmacsIcon className="h-4 w-4" />} />
      <MenuBar items={[["File", 24], ["Edit", 25.500], ["Options", 54.500], ["Buffers", 50], ["Tools", 36], ["Org", 27], ["Tbl", 20.500], ["Text", 28], ["Help", 32]]} />
      <div className="flex h-[34px] shrink-0 items-center border-b border-[#909090] bg-gradient-to-b from-[#cccccc] to-[#b4b4b4] pb-[2px] pl-[18px]">
        <svg viewBox="0 0 22 22" className="h-[22px] w-[21px]">
          <rect x="1" y="1" width="18" height="20" fill="#f1f1ee" stroke="#9b9b9b" />
          <path d="M14 12h4v3.500h3.500v4H18V22h-4v-2.500h-3v-4h3z" fill="#a9d23c" stroke="#6d9417" strokeWidth=".8" />
        </svg>
        <FolderIcon className="ml-2 h-[18px] w-[22px]" />
        <FolderIcon home className="ml-2 h-[18px] w-[22px]" />
        <svg viewBox="0 0 20 20" className="ml-[9px] h-5 w-5">
          <path d="M4 0l6 6 6-6 4 4-6 6 6 6-4 4-6-6-6 6-4-4 6-6-6-6z" fill="#4b4b4b" />
        </svg>
        <span className="ml-[11px] opacity-60"><SaveIcon className="h-[22px] w-[18px]" /></span>
        <span className="ml-[3px] leading-[34px] text-[#868686]"><Fit w={32}>Save</Fit></span>
        <Sep className="ml-[9px] h-[22px]" />
        <svg viewBox="0 0 18 20" className="ml-[10px] h-5 w-[18px]">
          <path d="M8 0L.5 7 8 13.500V9.500c4 0 6 3 4.500 9.500 5-5 6-14-4.500-14.500z" fill="#f5bf35" stroke="#b88712" strokeWidth=".9" />
        </svg>
        <span className="ml-1 leading-[34px] text-[#3a3a3a]"><Fit w={37}>Undo</Fit></span>
        <Sep className="ml-[10px] h-[22px]" />
        <svg viewBox="0 0 18 22" className="ml-[10px] h-[22px] w-[17px]">
          <path d="M3 0l7 14M15 0L8 14" stroke="#a4a4a4" strokeWidth="2" />
          <circle cx="4.500" cy="17.500" r="3" fill="none" stroke="#cc6464" strokeWidth="2" />
          <circle cx="13.500" cy="17.500" r="3" fill="none" stroke="#cc6464" strokeWidth="2" />
        </svg>
        <svg viewBox="0 0 18 20" className="ml-[12px] h-5 w-[18px]">
          <rect x=".5" y=".5" width="11" height="14" fill="#d9d9d9" stroke="#b5b5b5" />
          <rect x="5.500" y="4.500" width="12" height="15" fill="#dedede" stroke="#b0b0b0" />
          <path d="M5 6c0 5 2 6 4 6V9l5 4.500-5 4.500v-3c-4 0-6-4-4-9z" fill="#a3bf6c" />
        </svg>
        <svg viewBox="0 0 20 21" className="ml-[13px] h-[21px] w-5">
          <rect x=".5" y="2" width="17" height="18" rx="1" fill="#c8913d" stroke="#8c6220" />
          <rect x="5" y="0" width="8" height="5" fill="#d5d5d5" stroke="#777" />
          <rect x="8" y="8" width="11.500" height="12.500" fill="#f6f6f6" stroke="#999" />
          <path d="M10 11h7M10 13.500h7M10 16h5" stroke="#777" />
        </svg>
        <Sep className="ml-[10px] h-[22px]" />
        <Magnifier className="ml-[9px] h-[21px] w-[21px] text-[#4a4a4a]" />
      </div>
      <div className="flex h-[1059px] shrink-0 font-['DejaVu_Sans_Mono',monospace] text-[15px] leading-[18px] tracking-[-0.030px] text-[#c8c8c4]">
        <div className="w-[8.500px] bg-black" />
        <div className="w-[927.500px] bg-[#191b25] pl-[0.500px]">
          {buffer.map((e, i) => (
            <div key={i} className={`whitespace-pre ${lineHeights[e.h ?? "normal"]}`}>{e.t}</div>
          ))}
        </div>
        <div className="w-[9px] bg-black" />
        <div className="flex-1 bg-gradient-to-r from-[#e6e6e8] to-[#fafafc] pl-[3px] pt-[919px]">
          <div className="h-[57px] w-[9px] rounded-full border border-[#8f8f8f] bg-[#d4d4d4]" />
        </div>
      </div>
      <div className="h-[21px] shrink-0 whitespace-pre border-b border-t border-b-[#7a7a7a] border-t-[#e8e8e8] bg-[#bfbfbf] pl-[10px] font-['DejaVu_Sans_Mono',monospace] text-[15px] leading-[18px] tracking-[-0.030px] text-black">
        U:---  <b className="text-[#00008b]">2nd_week.org</b>   Bot L548  Git:master  (Org Wrap)
      </div>
      <div className="flex h-[18px] shrink-0 bg-[#191b25] font-['DejaVu_Sans_Mono',monospace] text-[15px] leading-[18px] tracking-[-0.030px] text-[#c8c8c4]">
        <div className="w-[8.500px] bg-black" />
        <div className="w-[927.500px]">Wrote /home/moi/Documents/Travail/BTC/reports/2nd_week.org</div>
        <div className="w-[9px] bg-black" />
      </div>
    </div>
  );
}

export default function App() {
  return (
    <div className="flex h-[1200px] w-[3840px] overflow-hidden bg-[#1f8ba8] font-['Noto_Sans','Open_Sans',sans-serif] text-[14.670px]">
      <div className="w-[1920px] shrink-0 bg-black">
        <TopPanel />
        <ImageViewer />
      </div>
      <div className="h-full w-[960px] shrink-0 bg-[#166f86]">
        <PdfReader />
      </div>
      <div className="h-full w-[960px] shrink-0 bg-gradient-to-r from-[#2093b1] to-[#1c86a2]">
        <Emacs />
      </div>
    </div>
  );
}
